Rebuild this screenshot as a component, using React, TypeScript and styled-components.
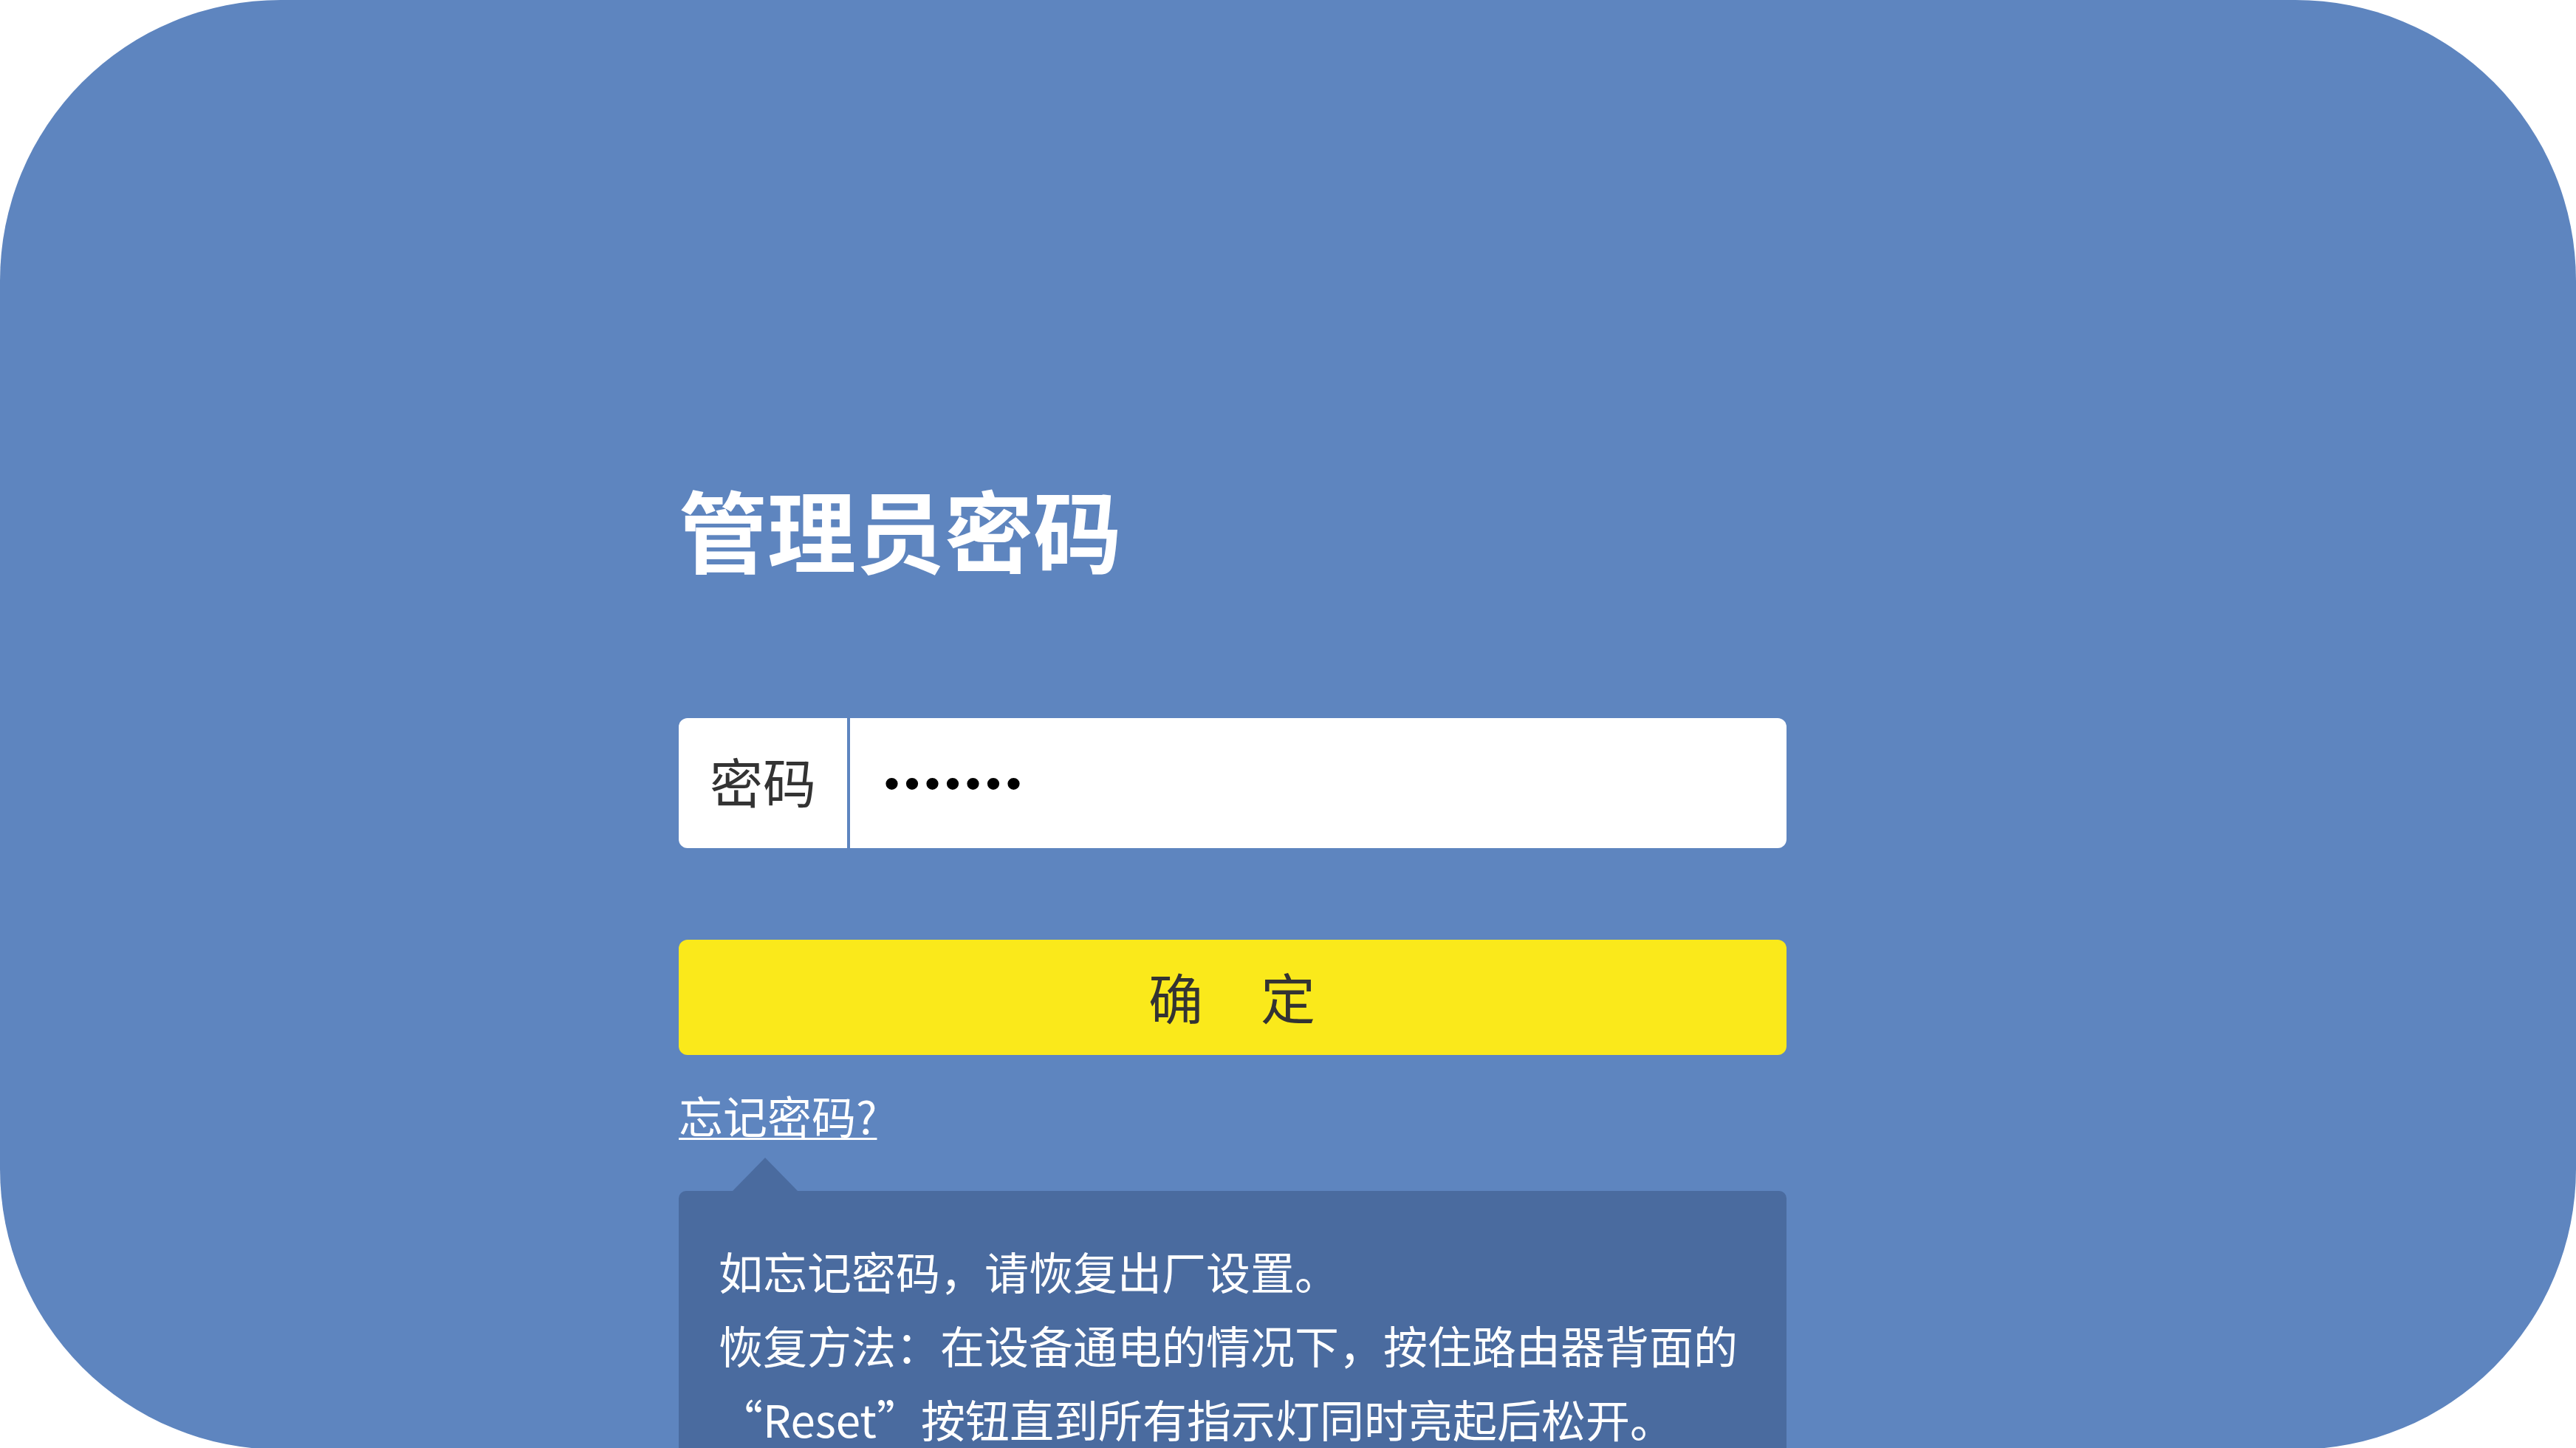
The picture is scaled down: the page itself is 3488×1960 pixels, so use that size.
import styled, { createGlobalStyle } from "styled-components";

const GlobalStyle = createGlobalStyle`
  html, body {
    margin: 0;
    padding: 0;
    background: #ffffff;
    overflow: hidden;
  }
  body {
    font-family: "Noto Sans CJK SC", "Noto Sans", sans-serif;
  }
`;

const Panel = styled.div`
  width: 3488px;
  height: 1962px;
  border-radius: 380px;
  background-color: #5e85bf;
  overflow: hidden;
  padding-top: 655px;
  box-sizing: border-box;
`;

const Form = styled.form`
  width: 1500px;
  margin-left: 919px;
  display: flex;
  flex-direction: column;
  align-items: stretch;
`;

const Title = styled.h1`
  margin: 0 0 197px;
  font-size: 120px;
  line-height: 120px;
  font-weight: 700;
  color: #ffffff;
`;

const InputGroup = styled.div`
  display: flex;
  gap: 4px;
  height: 176px;
`;

const Label = styled.label`
  width: 228px;
  flex: none;
  display: flex;
  align-items: center;
  justify-content: center;
  padding-bottom: 10px;
  box-sizing: border-box;
  background: #ffffff;
  border-radius: 12px 0 0 12px;
  font-size: 72px;
  color: #333333;
`;

const PasswordInput = styled.input`
  flex: 1;
  min-width: 0;
  border: none;
  outline: none;
  margin: 0;
  background: #ffffff;
  border-radius: 0 12px 12px 0;
  padding: 0 0 0 46px;
  font-family: "Liberation Sans", sans-serif;
  font-size: 60px;
  letter-spacing: 6.5px;
  color: #000000;
`;

const SubmitButton = styled.button`
  margin-top: 124px;
  height: 156px;
  padding: 0 0 6px;
  border: none;
  border-radius: 12px;
  background: #fae91b;
  color: #333333;
  font-family: "Noto Sans CJK SC", sans-serif;
  font-size: 74px;
  letter-spacing: 2px;
  cursor: pointer;
`;

const ForgotLink = styled.a`
  align-self: flex-start;
  margin-top: 51px;
  font-size: 60px;
  line-height: 60px;
  color: #ffffff;
  text-decoration: underline;
  text-decoration-thickness: 3px;
  text-underline-offset: 5px;
  cursor: pointer;
`;

const Tip = styled.div`
  position: relative;
  margin-top: 73px;
  padding: 58px 40px 60px 54px;
  background: #4a6b9f;
  border-radius: 10px;
  color: #ffffff;
  font-size: 60px;
  line-height: 100px;

  &::before {
    content: "";
    position: absolute;
    top: -45px;
    left: 73px;
    border-left: 44px solid transparent;
    border-right: 44px solid transparent;
    border-bottom: 45px solid #4a6b9f;
  }
`;

const TipLine = styled.p`
  margin: 0;
`;

const Keep = styled.span`
  white-space: nowrap;
`;

// full-width quotation mark, as the CJK UI font draws it
const Quote = styled.span<{ $open?: boolean }>`
  display: inline-block;
  width: 1em;
  text-align: ${(p) => (p.$open ? "right" : "left")};
`;

export default function App() {
  return (
    <>
      <GlobalStyle />
      <Panel>
        <Form onSubmit={(e) => e.preventDefault()}>
          <Title>管理员密码</Title>
          <InputGroup>
            <Label htmlFor="pwd">密码</Label>
            <PasswordInput id="pwd" type="password" defaultValue="1234567" readOnly />
          </InputGroup>
          <SubmitButton type="submit">确　定</SubmitButton>
          <ForgotLink>忘记密码?</ForgotLink>
          <Tip>
            <TipLine>如忘记密码，请恢复出厂设置。</TipLine>
            <TipLine>
              恢复方法：在设备通电的情况下，按住路由器背面的
              <Keep>
                <Quote $open>“</Quote>Reset<Quote>”</Quote>
              </Keep>
              按钮直到所有指示灯同时亮起后松开。
            </TipLine>
          </Tip>
        </Form>
      </Panel>
    </>
  );
}
